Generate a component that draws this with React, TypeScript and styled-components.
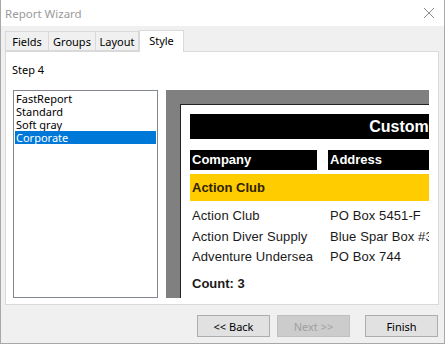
import React from 'react';
import styled, { createGlobalStyle } from 'styled-components';

const GlobalStyle = createGlobalStyle`
  html, body {
    margin: 0;
    padding: 0;
    background: #f0f0f0;
  }
  * {
    box-sizing: border-box;
  }
`;

const Window = styled.div`
  width: 445px;
  height: 344px;
  display: flex;
  flex-direction: column;
  background: #f0f0f0;
  border: 1px solid #a8a8a8;
  border-top: none;
  font-family: "Segoe UI", "Noto Sans", sans-serif;
  font-size: 11px;
  color: #000;
  overflow: hidden;
`;

const TitleBar = styled.div`
  height: 26px;
  flex: none;
  display: flex;
  align-items: center;
  justify-content: space-between;
  padding: 0 9px 0 4px;
  background: #fff;
  color: #9a9a9a;
  font-size: 11.5px;
`;

const Body = styled.div`
  flex: 1;
  display: flex;
  flex-direction: column;
  padding: 4px 5px 0 4px;
`;

const TabRow = styled.div`
  display: flex;
  align-items: flex-end;
  height: 21px;
  position: relative;
  z-index: 1;
`;

const Tab = styled.div<{ $active?: boolean; $w: number }>`
  width: ${p => p.$w}px;
  height: ${p => (p.$active ? 22 : 20)}px;
  margin-bottom: ${p => (p.$active ? -1 : 0)}px;
  display: flex;
  align-items: center;
  justify-content: center;
  padding-bottom: ${p => (p.$active ? 3 : 0)}px;
  background: ${p => (p.$active ? '#fff' : '#f0f0f0')};
  border: 1px solid #d9d9d9;
  border-bottom: ${p => (p.$active ? 'none' : '1px solid #d9d9d9')};
  border-left: ${p => (p.$active ? '1px solid #d9d9d9' : 'none')};
  &:first-child {
    border-left: 1px solid #d9d9d9;
  }
`;

const Panel = styled.div`
  width: 434px;
  height: 254px;
  background: #fff;
  border: 1px solid #d9d9d9;
  padding: 10px 0 0 7px;
  display: flex;
  flex-direction: column;
`;

const StepLabel = styled.div`
  line-height: 16px;
  margin-left: -1px;
`;

const Content = styled.div`
  display: flex;
  gap: 8px;
  margin-top: 12px;
  height: 208px;
`;

const ListBox = styled.div`
  width: 145px;
  height: 100%;
  border: 1px solid #828790;
  padding: 1px;
  display: flex;
  flex-direction: column;
`;

const ListItem = styled.div<{ $selected?: boolean }>`
  height: 13px;
  line-height: 13px;
  padding-left: 1px;
  background: ${p => (p.$selected ? '#0078d7' : 'transparent')};
  color: ${p => (p.$selected ? '#fff' : '#000')};
`;

const Preview = styled.div`
  width: 263px;
  height: 100%;
  background: #808080;
  padding: 14px 0 0 14px;
  overflow: hidden;
`;

const Page = styled.div`
  width: 480px;
  height: 260px;
  background: #fff;
  border: 1px solid #222;
  padding: 9px 0 0 9px;
  font-family: "Liberation Sans", Arial, sans-serif;
  color: #1a1a1a;
`;

const ReportTitle = styled.div`
  width: 442px;
  height: 25px;
  background: #000;
  color: #fff;
  font-weight: bold;
  font-size: 16px;
  display: flex;
  align-items: center;
  justify-content: center;
`;

const HeaderRow = styled.div`
  display: flex;
  gap: 11px;
  margin-top: 11px;
`;

const HeaderCell = styled.div<{ $w: number }>`
  width: ${p => p.$w}px;
  height: 20px;
  background: #000;
  color: #fff;
  font-weight: bold;
  font-size: 13px;
  line-height: 20px;
  padding-left: 2px;
`;

const GroupBand = styled.div`
  width: 442px;
  height: 27px;
  margin-top: 4px;
  background: #ffcc00;
  color: #2e2200;
  font-weight: bold;
  font-size: 13px;
  line-height: 27px;
  padding-left: 2px;
`;

const DataRows = styled.div`
  margin-top: 5px;
  display: flex;
  flex-direction: column;
`;

const DataRow = styled.div`
  display: flex;
  height: 20.5px;
  line-height: 20px;
  font-size: 13px;
  letter-spacing: 0.1px;
`;

const DataCell = styled.div<{ $w?: number }>`
  width: ${p => (p.$w ? `${p.$w}px` : 'auto')};
  padding-left: 2px;
  white-space: nowrap;
`;

const CountRow = styled.div`
  margin-top: 6px;
  font-weight: bold;
  font-size: 13px;
  line-height: 20px;
  padding-left: 2px;
`;

const Footer = styled.div`
  display: flex;
  justify-content: flex-end;
  align-items: center;
  padding: 10px 1px 0 0;
`;

const Button = styled.div<{ $disabled?: boolean; $ml?: number }>`
  width: 73px;
  height: 22px;
  margin-left: ${p => p.$ml ?? 0}px;
  display: flex;
  align-items: center;
  justify-content: center;
  background: ${p => (p.$disabled ? '#cccccc' : '#e1e1e1')};
  border: 1px solid ${p => (p.$disabled ? '#bfbfbf' : '#adadad')};
  color: ${p => (p.$disabled ? '#a0a0a0' : '#000')};
`;

const CloseIcon = () => (
  <svg width="12" height="12" viewBox="0 0 12 12">
    <path d="M1 1 L11 11 M11 1 L1 11" stroke="#8c8c8c" strokeWidth="1" fill="none" />
  </svg>
);

const rows = [
  ['Action Club', 'PO Box 5451-F'],
  ['Action Diver Supply', 'Blue Spar Box #3'],
  ['Adventure Undersea', 'PO Box 744'],
];

export default function App() {
  return (
    <>
      <GlobalStyle />
      <Window>
        <TitleBar>
          <span>Report Wizard</span>
          <CloseIcon />
        </TitleBar>
        <Body>
          <TabRow>
            <Tab $w={44}>Fields</Tab>
            <Tab $w={47}>Groups</Tab>
            <Tab $w={43}>Layout</Tab>
            <Tab $w={45} $active>Style</Tab>
          </TabRow>
          <Panel>
            <StepLabel>Step 4</StepLabel>
            <Content>
              <ListBox>
                <ListItem>FastReport</ListItem>
                <ListItem>Standard</ListItem>
                <ListItem>Soft gray</ListItem>
                <ListItem $selected>Corporate</ListItem>
              </ListBox>
              <Preview>
                <Page>
                  <ReportTitle>Customers</ReportTitle>
                  <HeaderRow>
                    <HeaderCell $w={127}>Company</HeaderCell>
                    <HeaderCell $w={140}>Address</HeaderCell>
                  </HeaderRow>
                  <GroupBand>Action Club</GroupBand>
                  <DataRows>
                    {rows.map(r => (
                      <DataRow key={r[0]}>
                        <DataCell $w={138}>{r[0]}</DataCell>
                        <DataCell>{r[1]}</DataCell>
                      </DataRow>
                    ))}
                  </DataRows>
                  <CountRow>Count: 3</CountRow>
                </Page>
              </Preview>
            </Content>
          </Panel>
          <Footer>
            <Button>&lt;&lt; Back</Button>
            <Button $disabled $ml={7}>Next &gt;&gt;</Button>
            <Button $ml={15}>Finish</Button>
          </Footer>
        </Body>
      </Window>
    </>
  );
}
